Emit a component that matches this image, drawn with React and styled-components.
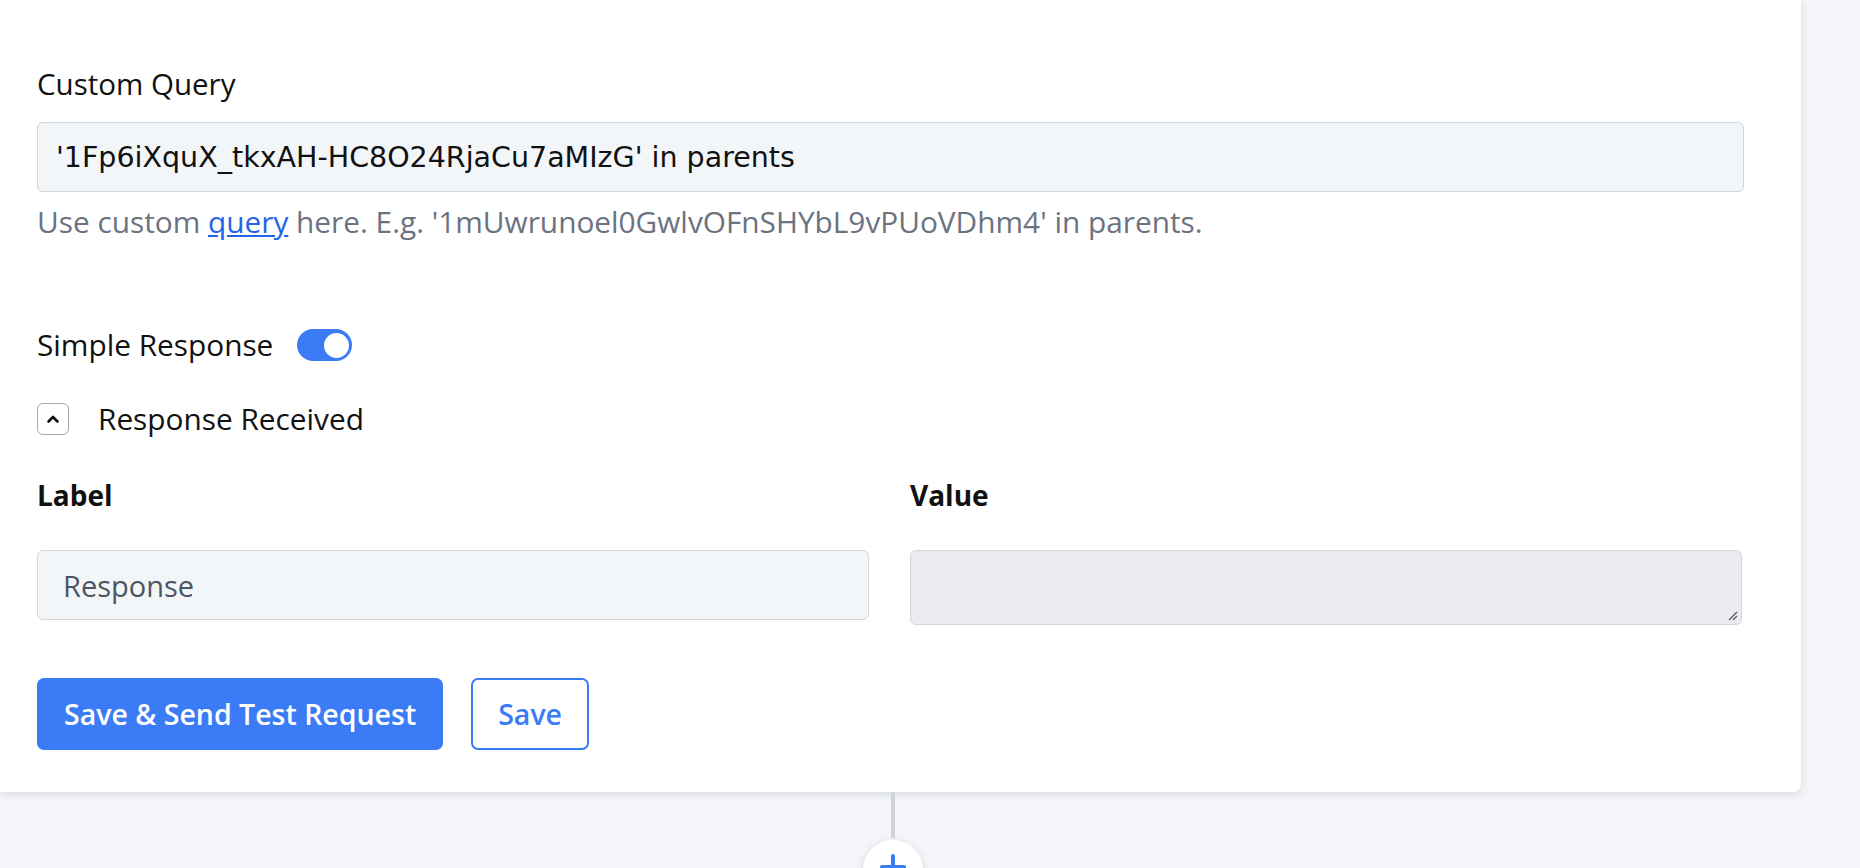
import React from "react";
import styled, { createGlobalStyle } from "styled-components";

const Global = createGlobalStyle`
  html, body {
    margin: 0;
    padding: 0;
    background: #f3f5f8;
    overflow: hidden;
    font-family: "Open Sans", Lato, sans-serif;
  }
`;

const Page = styled.div`
  width: 1860px;
  height: 868px;
  display: flex;
  flex-direction: column;
  & > * {
    flex-shrink: 0;
  }
`;

const Card = styled.div`
  width: 1801px;
  box-sizing: border-box;
  background: #fff;
  border-radius: 0 0 8px 0;
  box-shadow: 0 2px 8px rgba(15, 23, 42, 0.12);
  padding: 64px 57px 42px 37px;
`;

const FieldLabel = styled.div`
  font-size: 29.5px;
  line-height: 40px;
  color: #111;
`;

const TextInput = styled.div`
  margin-top: ${(p) => p.top || 18}px;
  height: ${(p) => p.h || 70}px;
  box-sizing: border-box;
  border: 1.5px solid #d2d6dc;
  border-radius: 6px;
  background: ${(p) => (p.disabled ? "#e9ebef" : "#f3f6f9")};
  display: flex;
  align-items: center;
  padding: 0 ${(p) => (p.code ? 18 : 25)}px;
  font-family: ${(p) => (p.code ? '"DejaVu Sans", Verdana, sans-serif' : "inherit")};
  font-size: ${(p) => (p.code ? 28.5 : 29)}px;
  color: ${(p) => (p.muted ? "#4b5563" : "#111")};
  position: relative;
`;

const Help = styled.div`
  margin-top: 12px;
  font-size: 29.8px;
  line-height: 36px;
  color: #6b7280;
  a {
    color: #2563eb;
    text-decoration: underline;
  }
`;

const Row = styled.div`
  display: flex;
  align-items: center;
  gap: ${(p) => p.gap || 20}px;
  margin-top: ${(p) => p.top}px;
  font-size: 29.8px;
  color: #111;
  line-height: 40px;
`;

const Toggle = styled.div`
  width: 55px;
  height: 32px;
  border-radius: 16px;
  background: #3b7cf6;
  display: flex;
  align-items: center;
  justify-content: flex-end;
  padding: 0 3px;
  box-sizing: border-box;
  &::after {
    content: "";
    width: 25px;
    height: 25px;
    border-radius: 50%;
    background: #fff;
  }
`;

const ChevronBox = styled.div`
  width: 32px;
  height: 32px;
  box-sizing: border-box;
  border: 1.5px solid #a3aab6;
  border-radius: 6px;
  display: flex;
  align-items: center;
  justify-content: center;
`;

const Grid = styled.div`
  display: grid;
  grid-template-columns: 832px 832px;
  column-gap: 41px;
  margin-top: 36px;
`;

const ColHead = styled.div`
  font-size: 28px;
  font-weight: 700;
  line-height: 40px;
  color: #111;
`;

const Grip = styled.svg`
  position: absolute;
  right: 3px;
  bottom: 3px;
`;

const Actions = styled.div`
  display: flex;
  gap: 28px;
  margin-top: 53px;
`;

const Button = styled.button`
  height: 72px;
  padding: 0 ${(p) => (p.primary ? 25 : 25)}px;
  border-radius: 7px;
  font-family: inherit;
  font-size: 28.5px;
  font-weight: 600;
  border: 2px solid #3b7cf6;
  background: ${(p) => (p.primary ? "#3b7cf6" : "#fff")};
  color: ${(p) => (p.primary ? "#fff" : "#3b7cf6")};
`;

const Connector = styled.div`
  margin-left: 891px;
  width: 4px;
  height: 46px;
  background: #d1d5db;
`;

const AddCircle = styled.div`
  margin-left: 863px;
  margin-top: 2px;
  width: 60px;
  height: 60px;
  border-radius: 50%;
  background: #fff;
  box-shadow: 0 2px 8px rgba(15, 23, 42, 0.12);
  display: flex;
  justify-content: center;
  padding-top: 14px;
  box-sizing: border-box;
`;

export default function App() {
  return (
    <Page>
      <Global />
      <Card>
        <FieldLabel>Custom Query</FieldLabel>
        <TextInput code>'1Fp6iXquX_tkxAH-HC8O24RjaCu7aMIzG' in parents</TextInput>
        <Help>
          Use custom <a href="#q">query</a> here. E.g. '1mUwrunoel0GwlvOFnSHYbL9vPUoVDhm4' in parents.
        </Help>
        <Row top={85} gap={24}>
          Simple Response
          <Toggle />
        </Row>
        <Row top={34} gap={29}>
          <ChevronBox>
            <svg width="14" height="10" viewBox="0 0 14 10">
              <path d="M2.5 7.5 L7 3 L11.5 7.5" fill="none" stroke="#111" strokeWidth="2.6" strokeLinecap="round" strokeLinejoin="round" />
            </svg>
          </ChevronBox>
          Response Received
        </Row>
        <Grid>
          <ColHead>Label</ColHead>
          <ColHead>Value</ColHead>
          <TextInput muted top={35}>Response</TextInput>
          <TextInput disabled top={35} h={75}>
            <Grip width="12" height="12" viewBox="0 0 12 12">
              <path d="M11 3 L3 11 M11 7 L7 11" stroke="#555" strokeWidth="1.2" />
            </Grip>
          </TextInput>
        </Grid>
        <Actions>
          <Button primary>Save &amp; Send Test Request</Button>
          <Button>Save</Button>
        </Actions>
      </Card>
      <Connector />
      <AddCircle>
        <svg width="26" height="26" viewBox="0 0 26 26">
          <path d="M13 2 V24 M2 13 H24" stroke="#3b7cf6" strokeWidth="4" strokeLinecap="round" />
        </svg>
      </AddCircle>
    </Page>
  );
}
